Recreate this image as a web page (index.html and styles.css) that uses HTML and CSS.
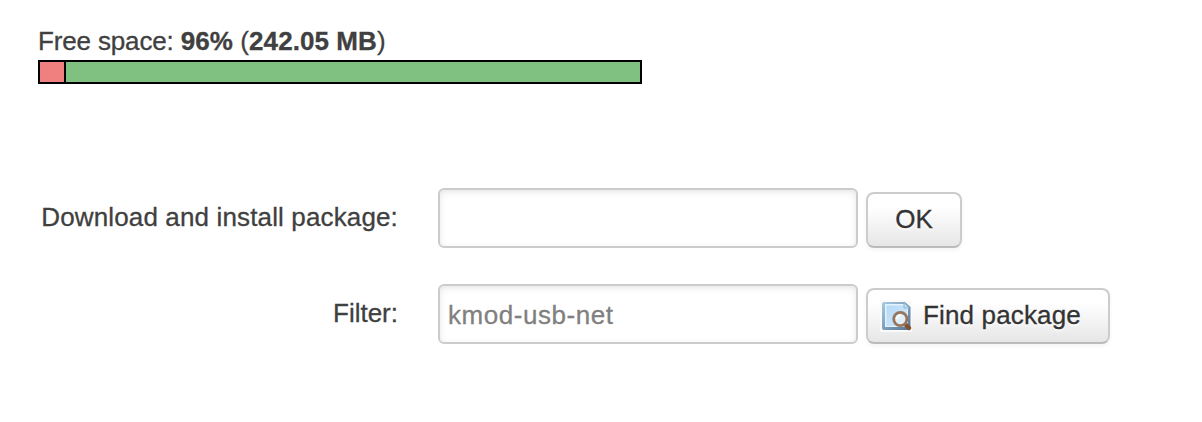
FILE: index.html
```html
<!DOCTYPE html>
<html lang="en">
<head>
<meta charset="utf-8">
<title>Software</title>
<link rel="stylesheet" href="styles.css">
</head>
<body>
<main class="page">
  <div class="space-label"><span class="space-caption">Free space: </span><strong>96%</strong> (<strong>242.05 MB</strong>)</div>
  <div class="space-bar"><div class="space-used"></div></div>
  <form class="form">
    <div class="row">
      <label class="label label-long" for="url">Download and install package:</label>
      <input class="input" id="url" type="text">
      <button class="button button-ok" type="button">OK</button>
    </div>
    <div class="row">
      <label class="label" for="query">Filter:</label>
      <input class="input" id="query" type="text" placeholder="kmod-usb-net">
      <button class="button button-find" type="button">
        <svg class="icon" viewBox="0 0 32 32" aria-hidden="true">
          <defs>
            <linearGradient id="edge" x1="0" y1="0" x2="1" y2="1"><stop offset="0" stop-color="#a9cbe0"/><stop offset="1" stop-color="#527394"/></linearGradient>
            <linearGradient id="sheet" x1="0" y1="0" x2="1" y2="1"><stop offset="0" stop-color="#b4d9f7"/><stop offset="1" stop-color="#d3e9fb"/></linearGradient>
            <filter id="soft"><feGaussianBlur stdDeviation=".45"/></filter>
          </defs>
          <rect width="32" height="32" fill="#fafafa"/>
          <g filter="url(#soft)">
            <path d="M4 2H25L30.5 7V28Q30.5 30 28 30H4Q2 30 2 28V4Q2 2 4 2Z" fill="url(#edge)"/>
            <path d="M5 4H24L28 8V27H5Z" fill="#e4f2fe"/>
            <path d="M6.5 5.5H23L27 9V26H6.5Z" fill="url(#sheet)"/>
            <path d="M24 3V8H29" fill="#c3ddef" stroke="#91b4cc"/>
            <path d="M25 24L29 28" stroke="#80512f" stroke-width="4.5" stroke-linecap="round"/>
            <circle cx="20.3" cy="19" r="6.6" fill="#e2effa" stroke="#98765d" stroke-width="2.8"/>
            <path d="M16.8 19A3.5 3.5 0 0 1 20.3 15.5" fill="none" stroke="#fff" stroke-width="2"/>
          </g>
        </svg>
        <span class="find-text">Find package</span>
      </button>
    </div>
  </form>
</main>
</body>
</html>
```
FILE: styles.css
```css
* { box-sizing: border-box; }
body {
  margin: 0;
  background: #fff;
  color: #404040;
  font-family: "Liberation Sans", Arial, sans-serif;
  font-size: 26px;
  -webkit-text-stroke-width: .3px;
}
.page { padding: 24px 38px; }
.space-label { height: 36px; line-height: 34px; white-space: nowrap; letter-spacing: .08px; }
.space-caption { letter-spacing: -.15px; }
.space-bar {
  width: 604px;
  height: 24px;
  border: 2px solid #000;
  background: #80c080;
}
.space-used {
  width: 26px;
  height: 20px;
  border-right: 2px solid #000;
  background: #f08080;
}
.form {
  display: flex;
  flex-direction: column;
  gap: 36px;
  margin-top: 104px;
}
.row { display: flex; height: 60px; }
.label {
  width: 360px;
  margin-right: 40px;
  line-height: 58px;
  text-align: right;
  white-space: nowrap;
}
.label-long { letter-spacing: .14px; }
.input {
  width: 420px;
  height: 60px;
  margin: 0 8px 0 0;
  padding: 2px 8px 0;
  border: 2px solid #ccc;
  border-radius: 6px;
  background: #fff;
  box-shadow: inset 0 2px 6px rgba(0, 0, 0, .1);
  font: inherit;
  letter-spacing: .55px;
  color: #808080;
}
.input::placeholder { color: #808080; opacity: 1; }
.button {
  display: flex;
  align-items: center;
  height: 56px;
  margin: 4px 0 0;
  border: 2px solid #ccc;
  border-bottom-color: #bbb;
  border-radius: 8px;
  background: linear-gradient(#fff, #fff 25%, #e6e6e6);
  box-shadow: inset 0 2px 0 rgba(255, 255, 255, .2), 0 2px 4px rgba(0, 0, 0, .05);
  color: #333;
  font: inherit;
  line-height: 36px;
  text-shadow: 0 2px 2px rgba(255, 255, 255, .75);
  white-space: nowrap;
}
.button-ok { justify-content: center; width: 96px; padding: 0 0 2px; }
.button-find { width: 244px; padding: 0 0 0 12px; }
.find-text { padding-bottom: 2px; letter-spacing: .15px; }
.icon { width: 32px; height: 32px; margin-right: 11px; }
```
